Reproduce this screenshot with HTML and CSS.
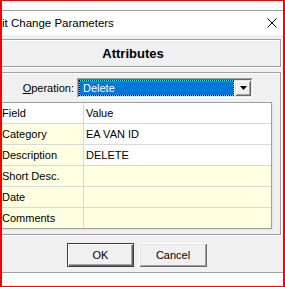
FILE: index.html
```html
<!DOCTYPE html>
<html>
<head>
<meta charset="utf-8">
<link rel="stylesheet" href="styles.css">
</head>
<body>
<div class="frame">
  <div class="topgap"></div>
  <div class="titlebar">
    <span class="title">it Change Parameters</span>
    <svg class="close" width="10" height="10" viewBox="0 0 10 10"><path d="M0.5 0.5L9.5 9.5M9.5 0.5L0.5 9.5" stroke="#000" stroke-width="1" fill="none"/></svg>
  </div>
  <div class="dialog">
    <div class="banner">Attributes</div>
    <div class="group">
      <div class="oprow">
        <label class="oplabel"><span class="u">O</span>peration:</label>
        <div class="combo">
          <div class="combo-inner">
            <div class="sel">Delete</div>
            <div class="ddbtn"><svg width="7" height="4" viewBox="0 0 7 4"><polygon points="0,0 7,0 3.5,4" fill="#000"/></svg></div>
          </div>
        </div>
      </div>
      <div class="grid">
        <div class="cell">Field</div><div class="cell">Value</div>
        <div class="cell y">Category</div><div class="cell">EA VAN ID</div>
        <div class="cell y">Description</div><div class="cell">DELETE</div>
        <div class="cell y">Short Desc.</div><div class="cell y"></div>
        <div class="cell y">Date</div><div class="cell y"></div>
        <div class="cell y">Comments</div><div class="cell y"></div>
      </div>
    </div>
    <div class="buttons">
      <button class="btn def">OK</button>
      <button class="btn cancel">Cancel</button>
    </div>
  </div>
  <div class="footer"></div>
</div>
</body>
</html>
```

FILE: styles.css
```css
* { box-sizing: border-box; }
html, body { margin: 0; padding: 0; background: #fff; }
body {
  font-family: "Liberation Sans", Arial, sans-serif;
  font-size: 11px;
  color: #000;
}
.frame {
  width: 285px;
  height: 287px;
  border: 1px solid #f00;
  border-left-width: 2px;
  border-right-width: 2px;
  overflow: hidden;
  display: flex;
  flex-direction: column;
  background: #fff;
}
.topgap {
  flex: none;
  height: 10px;
  border-bottom: 1px solid #a0a0a0;
}
.titlebar {
  flex: none;
  height: 24px;
  display: flex;
  align-items: center;
  justify-content: space-between;
  padding-right: 6px;
  background: #fff;
}
.title {
  font-size: 11.5px;
  white-space: nowrap;
}
.close { display: block; }
.dialog {
  flex: none;
  height: 237px;
  background: #f0f0f0;
  padding: 4px 0 5px;
  display: flex;
  flex-direction: column;
}
.banner {
  flex: none;
  margin: 0 2px 0 -17px;
  height: 28px;
  border: 1px solid #a0a0a0;
  box-shadow: 1px 1px 0 #fff, inset 1px 1px 0 #fff;
  display: flex;
  align-items: center;
  justify-content: center;
  font-weight: bold;
  font-size: 13px;
}
.group {
  flex: none;
  margin: 5px 2px 0 -17px;
  height: 163px;
  border: 1px solid #a0a0a0;
  box-shadow: 1px 1px 0 #fff, inset 1px 1px 0 #fff;
  padding: 5px 0;
}
.oprow {
  display: flex;
  align-items: center;
  height: 20px;
}
.oplabel {
  width: 88px;
  text-align: right;
  white-space: nowrap;
}
.u { text-decoration: underline; }
.combo {
  margin-left: 3px;
  width: 176px;
  height: 20px;
  border: 1px solid;
  border-color: #a0a0a0 #fff #fff #a0a0a0;
  background: #fff;
}
.combo-inner {
  height: 100%;
  border: 1px solid;
  border-color: #696969 #e3e3e3 #e3e3e3 #696969;
  display: flex;
}
.sel {
  flex: 1;
  border: 1px dotted #000;
  background: linear-gradient(#0078d7, #0078d7) padding-box, border-box #0ff;
  color: #fff;
  padding-left: 3px;
  line-height: 14px;
  white-space: nowrap;
}
.ddbtn {
  width: 16px;
  margin-left: 1px;
  background: #f0f0f0;
  box-shadow: inset 1px 1px 0 #e3e3e3, inset -1px -1px 0 #696969, inset 2px 2px 0 #fff, inset -2px -2px 0 #a0a0a0;
  display: flex;
  align-items: center;
  justify-content: center;
}
.ddbtn svg { display: block; }
.grid {
  margin: 4px 0 0 13px;
  width: 273px;
  height: 127px;
  border: 1px solid #a0a0a0;
  box-shadow: 1px 1px 0 #e3e3e3;
  display: grid;
  grid-template-columns: 83px 1fr;
  grid-auto-rows: 20px;
  gap: 1px;
  background: #d8d8d8;
}
.cell {
  background: #fff;
  padding-left: 2px;
  line-height: 20px;
  white-space: nowrap;
  overflow: hidden;
}
.cell.y { background: #ffffe1; }
.buttons {
  flex: none;
  margin-top: 8px;
  display: flex;
  gap: 5px;
  padding-left: 65px;
}
.btn {
  height: 24px;
  padding: 0;
  font-family: "Liberation Sans", Arial, sans-serif;
  font-size: 11px;
  color: #000;
  background: #f0f0f0;
  border: none;
}
.btn.def {
  width: 67px;
  border: 1px solid #3c3c3c;
  box-shadow: inset 1px 1px 0 #fff, inset -1px -1px 0 #696969, inset -2px -2px 0 #a0a0a0;
}
.btn.cancel {
  width: 68px;
  box-shadow: inset 1px 1px 0 #fff, inset -1px -1px 0 #696969, inset 2px 2px 0 #e3e3e3, inset -2px -2px 0 #a0a0a0;
}
.footer {
  flex: none;
  height: 14px;
  border-top: 1px solid #a0a0a0;
  background: #fff;
}
```
